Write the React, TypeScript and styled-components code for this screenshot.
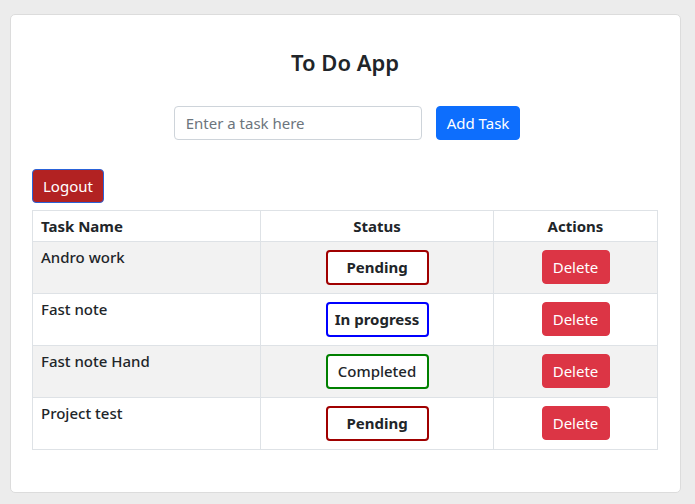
import React from "react";
import styled, { createGlobalStyle } from "styled-components";

const GlobalStyle = createGlobalStyle`
  html, body {
    margin: 0;
    padding: 0;
    background: #ececec;
  }
  body {
    font-family: "Noto Sans", "Open Sans", sans-serif;
    color: #212529;
  }
  * { box-sizing: border-box; }
`;

const Page = styled.div`
  padding: 14px 14px 11px 10px;
`;

const Card = styled.div`
  background: #ffffff;
  border: 1px solid #dcdcdc;
  border-radius: 5px;
  padding: 27px 22px 42px 21px;
`;

const Title = styled.h1`
  margin: 0 0 24px;
  text-align: center;
  font-size: 22px;
  font-weight: 600;
  line-height: 40px;
  color: #212529;
`;

const AddRow = styled.div`
  display: flex;
  justify-content: center;
  gap: 14px;
  padding-left: 4px;
  margin-bottom: 29px;
`;

const TaskInput = styled.input`
  width: 248px;
  height: 34px;
  padding: 0 11px;
  border: 1px solid #ced4da;
  border-radius: 4px;
  font-family: inherit;
  font-size: 15px;
  color: #212529;
  &::placeholder { color: #6c757d; }
`;

const Button = styled.button<{ $bg: string; $border?: string }>`
  height: 34px;
  padding: 0 10px;
  border: 1px solid ${(p) => p.$border ?? p.$bg};
  border-radius: 4px;
  background: ${(p) => p.$bg};
  color: #ffffff;
  font-family: inherit;
  font-size: 15px;
  line-height: 1;
  cursor: pointer;
`;

const LogoutRow = styled.div`
  margin-bottom: 7px;
`;

const Table = styled.table`
  width: 100%;
  border-collapse: collapse;
  font-size: 15px;
`;

const Th = styled.th<{ $align?: string }>`
  border: 1px solid #dee2e6;
  padding: 4px 8px;
  line-height: 22px;
  font-weight: 700;
  text-align: ${(p) => p.$align ?? "center"};
`;

const Row = styled.tr<{ $striped: boolean }>`
  background: ${(p) => (p.$striped ? "#f2f2f2" : "#ffffff")};
`;

const Td = styled.td<{ $align?: string }>`
  border: 1px solid #dee2e6;
  padding: 4px 8px;
  line-height: 23px;
  vertical-align: top;
  font-weight: 500;
  text-align: ${(p) => p.$align ?? "left"};
`;

const statusColors: Record<string, string> = {
  Pending: "#a00000",
  "In progress": "#0000ff",
  Completed: "#008000",
};

const StatusBadge = styled.div<{ $color: string; $weight: number }>`
  display: inline-flex;
  align-items: center;
  justify-content: center;
  width: 103px;
  height: 35px;
  margin: 4px 0;
  border: 2px solid ${(p) => p.$color};
  border-radius: 4px;
  background: #ffffff;
  font-weight: ${(p) => p.$weight};
  color: #212529;
`;

const DeleteButton = styled(Button)`
  width: 68px;
  margin: 4px 0;
  padding: 0;
`;

const tasks = [
  { name: "Andro work", status: "Pending" },
  { name: "Fast note", status: "In progress" },
  { name: "Fast note Hand", status: "Completed" },
  { name: "Project test", status: "Pending" },
];

export default function App() {
  return (
    <>
      <GlobalStyle />
      <Page>
        <Card>
          <Title>To Do App</Title>
          <AddRow>
            <TaskInput placeholder="Enter a task here" />
            <Button $bg="#0d6efd">Add Task</Button>
          </AddRow>
          <LogoutRow>
            <Button $bg="#b22222" $border="#2a62d8">Logout</Button>
          </LogoutRow>
          <Table>
            <colgroup>
              <col style={{ width: "228px" }} />
              <col style={{ width: "233px" }} />
              <col />
            </colgroup>
            <thead>
              <tr>
                <Th $align="left">Task Name</Th>
                <Th>Status</Th>
                <Th>Actions</Th>
              </tr>
            </thead>
            <tbody>
              {tasks.map((t, i) => (
                <Row key={i} $striped={i % 2 === 0}>
                  <Td>{t.name}</Td>
                  <Td $align="center">
                    <StatusBadge
                      $color={statusColors[t.status]}
                      $weight={t.status === "Completed" ? 500 : 700}
                    >
                      {t.status}
                    </StatusBadge>
                  </Td>
                  <Td $align="center">
                    <DeleteButton $bg="#dc3545">Delete</DeleteButton>
                  </Td>
                </Row>
              ))}
            </tbody>
          </Table>
        </Card>
      </Page>
    </>
  );
}
